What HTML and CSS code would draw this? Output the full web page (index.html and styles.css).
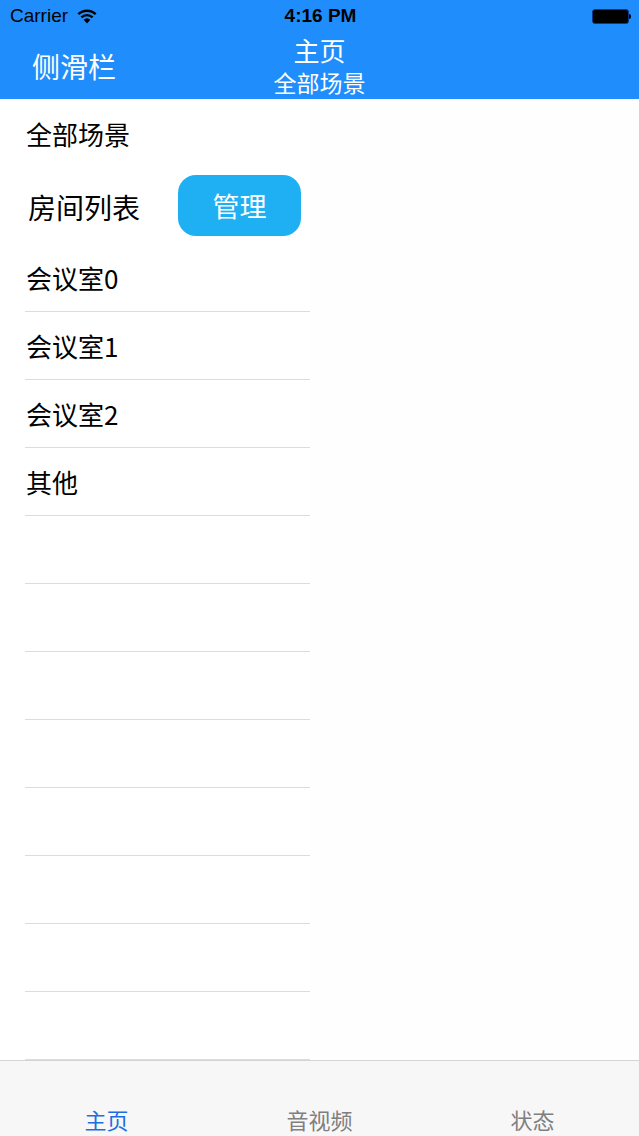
FILE: index.html
```html
<!DOCTYPE html>
<html lang="zh-CN">
<head>
    <meta charset="UTF-8">
    <meta name="viewport" content="width=device-width, initial-scale=1.0">
    <title>主页</title>
    <link rel="stylesheet" href="styles.css">
</head>
<body>

    <header class="topbar">
        <div class="status">
            <div class="status-left">
                <span class="carrier">Carrier</span>
                <svg class="wifi" width="20" height="15" viewBox="0 0 20 15">
                    <path d="M10 14.5 L6.6 10.8 A5 5 0 0 1 13.4 10.8 Z" fill="#000"/>
                    <path d="M4.4 8.4 A8 8 0 0 1 15.6 8.4" stroke="#000" stroke-width="2.4" fill="none"/>
                    <path d="M1.3 5.2 A12.5 12.5 0 0 1 18.7 5.2" stroke="#000" stroke-width="2.4" fill="none"/>
                </svg>
            </div>
            <span class="clock">4:16 PM</span>
            <div class="battery">
                <span class="battery-body"></span>
                <span class="battery-nub"></span>
            </div>
        </div>
        <div class="navbar">
            <span class="nav-left">侧滑栏</span>
            <div class="nav-title">
                <span class="title">主页</span>
                <span class="subtitle">全部场景</span>
            </div>
        </div>
    </header>

    <main class="content">
        <div class="side">
            <div class="all-row">全部场景</div>
            <div class="room-head">
                <span class="room-head-label">房间列表</span>
                <button class="manage">管理</button>
            </div>
            <ul class="rooms">
                <li>会议室0</li>
                <li>会议室1</li>
                <li>会议室2</li>
                <li>其他</li>
                <li></li>
                <li></li>
                <li></li>
                <li></li>
                <li></li>
                <li></li>
                <li></li>
                <li></li>
            </ul>
        </div>
        <div class="main-area"></div>
    </main>

    <nav class="tabbar">
        <span class="tab active">主页</span>
        <span class="tab">音视频</span>
        <span class="tab">状态</span>
    </nav>

</body>
</html>
```

FILE: styles.css
```css
body {
    margin: 0;
    padding: 0;
    font-family: "Noto Sans CJK SC", "Liberation Sans", sans-serif;
    background-color: #fff;
    width: 639px;
    height: 1136px;
    overflow: hidden;
    display: flex;
    flex-direction: column;
}

/* top blue area */
.topbar {
    background-color: #1f8efc;
    height: 99px;
    flex-shrink: 0;
}

.status {
    height: 32px;
    display: flex;
    align-items: center;
    justify-content: space-between;
    padding: 0 8px 0 10px;
    font-family: "Liberation Sans", sans-serif;
    color: #000;
}

.status-left {
    display: flex;
    align-items: center;
    gap: 9px;
    width: 120px;
}

.carrier {
    font-size: 19px;
}

.clock {
    font-size: 19px;
    font-weight: bold;
}

.battery {
    width: 120px;
    display: flex;
    justify-content: flex-end;
    align-items: center;
}

.battery-body {
    width: 35px;
    height: 13px;
    background-color: #000;
    border-radius: 3px;
    border: 1px solid #0a3a8a;
}

.battery-nub {
    width: 2px;
    height: 5px;
    background-color: #000;
    border-radius: 0 2px 2px 0;
}

.navbar {
    height: 67px;
    display: flex;
    align-items: center;
    position: relative;
    color: #fff;
}

.nav-left {
    font-size: 28px;
    margin-left: 32px;
}

.nav-title {
    position: absolute;
    left: 0;
    right: 0;
    top: 1px;
    display: flex;
    flex-direction: column;
    align-items: center;
    pointer-events: none;
}

.title {
    font-size: 26px;
    line-height: 34px;
}

.subtitle {
    font-size: 23px;
    line-height: 30px;
}

/* content */
.content {
    flex: 1;
    display: flex;
    min-height: 0;
}

.side {
    width: 310px;
    background-color: #fff;
    color: #000;
}

.main-area {
    flex: 1;
    background-color: #fefefe;
}

.all-row {
    height: 71px;
    display: flex;
    align-items: center;
    padding-left: 26px;
    padding-bottom: 2px;
    box-sizing: border-box;
    font-size: 26px;
}

.room-head {
    height: 74px;
    display: flex;
    align-items: center;
    padding-left: 28px;
    gap: 38px;
}

.room-head-label {
    font-size: 28px;
}

.manage {
    width: 123px;
    height: 61px;
    border: none;
    border-radius: 18px;
    background-color: #1fb0f4;
    color: #fff;
    font-family: inherit;
    font-size: 27px;
    padding: 0;
    margin-bottom: 3px;
}

.rooms {
    list-style: none;
    margin: 0;
    padding: 0 0 0 25px;
}

.rooms li {
    height: 67px;
    border-bottom: 1px solid #dcdce0;
    display: flex;
    align-items: center;
    padding-left: 1px;
    font-size: 26px;
}

/* bottom tabs */
.tabbar {
    height: 76px;
    flex-shrink: 0;
    background-color: #f7f7f8;
    border-top: 1px solid #d4d4d6;
    box-sizing: border-box;
    display: flex;
    align-items: flex-end;
    padding-bottom: 2px;
}

.tab {
    flex: 1;
    text-align: center;
    font-size: 22px;
    line-height: 30px;
    color: #7f7f7f;
}

.tab.active {
    color: #1b6fe0;
}
```
